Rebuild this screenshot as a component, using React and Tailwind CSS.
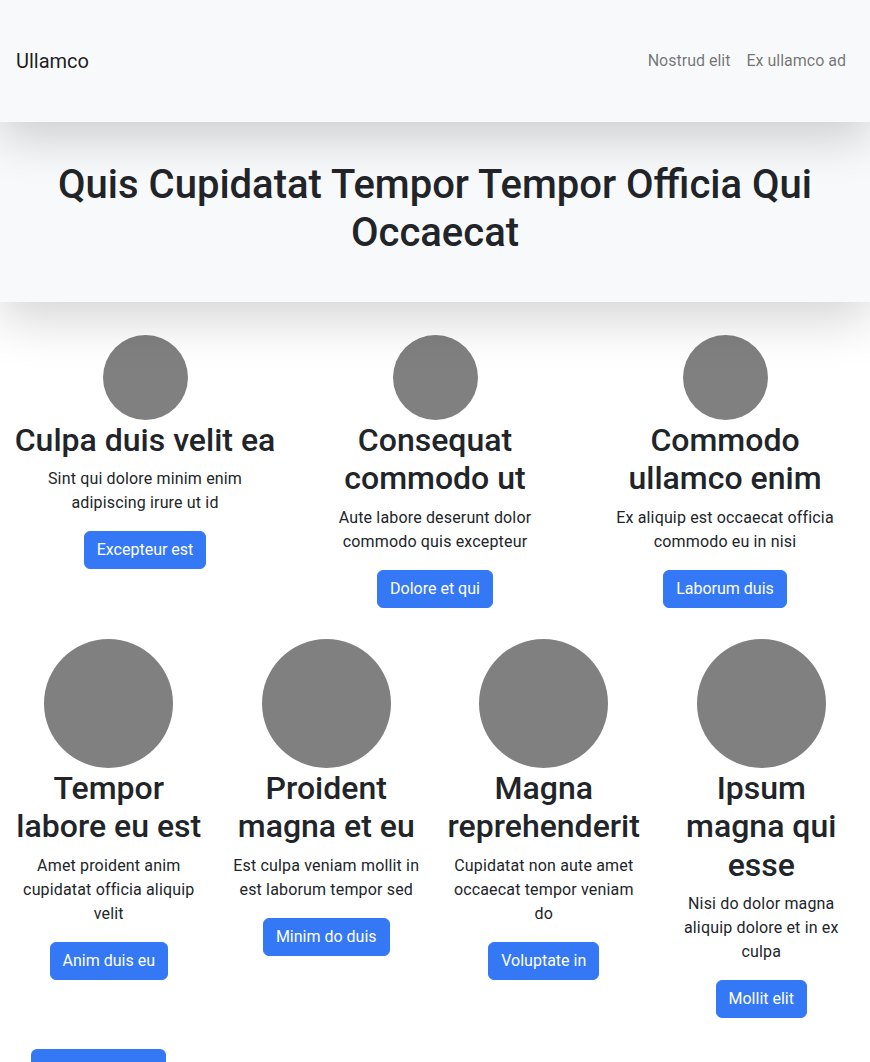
const topCards = [
  { title: 'Culpa duis velit ea', text: 'Sint qui dolore minim enim adipiscing irure ut id', cta: 'Excepteur est' },
  { title: 'Consequat commodo ut', text: 'Aute labore deserunt dolor commodo quis excepteur', cta: 'Dolore et qui' },
  { title: 'Commodo ullamco enim', text: 'Ex aliquip est occaecat officia commodo eu in nisi', cta: 'Laborum duis' },
]

const bottomCards = [
  { title: 'Tempor labore eu est', text: 'Amet proident anim cupidatat officia aliquip velit', cta: 'Anim duis eu' },
  { title: 'Proident magna et eu', text: 'Est culpa veniam mollit in est laborum tempor sed', cta: 'Minim do duis' },
  { title: 'Magna reprehenderit', text: 'Cupidatat non aute amet occaecat tempor veniam do', cta: 'Voluptate in' },
  { title: 'Ipsum magna qui esse', text: 'Nisi do dolor magna aliquip dolore et in ex culpa', cta: 'Mollit elit' },
]

function Card({ card, size }) {
  return (
    <div className="flex flex-col items-center px-3 text-center">
      <div className={`${size} mb-px shrink-0 rounded-full bg-[#808080]`} />
      <h2 className="mb-2 text-[32px] font-medium leading-[1.2] text-[#212529]">{card.title}</h2>
      <p className="mb-4 text-base leading-6 tracking-[0.01em] text-[#212529]">{card.text}</p>
      <button className="rounded-md border border-[#3478f6] bg-[#3478f6] px-3 py-1.5 text-base leading-6 text-white">
        {card.cta}
      </button>
    </div>
  )
}

export default function App() {
  return (
    <div className="min-h-screen bg-white font-['Roboto','Helvetica_Neue',sans-serif] text-[#212529]">
      <nav className="relative z-20 flex h-[122px] items-center justify-between bg-[#f8f9fa] px-4 shadow-[0_1rem_3rem_rgba(0,0,0,0.175)]">
        <a className="text-xl text-black/90">Ullamco</a>
        <div className="flex">
          <a className="px-2 text-base text-black/55">Nostrud elit</a>
          <a className="px-2 text-base text-black/55">Ex ullamco ad</a>
        </div>
      </nav>

      <header className="relative z-10 bg-[#f8f9fa] px-6 pb-[45px] pt-[39px] text-center shadow-[0_1rem_3rem_rgba(0,0,0,0.175)]">
        <h1 className="text-[40px] font-medium leading-[1.2]">Quis Cupidatat Tempor Tempor Officia Qui Occaecat</h1>
      </header>

      <section className="grid grid-cols-3 pt-[33px]">
        {topCards.map((c) => (
          <Card key={c.title} card={c} size="h-[85px] w-[85px]" />
        ))}
      </section>

      <section className="grid grid-cols-4 pt-[31px]">
        {bottomCards.map((c) => (
          <Card key={c.title} card={c} size="h-[129px] w-[129px]" />
        ))}
      </section>

      <div className="pl-[31px] pt-[31px]">
        <button className="w-[135px] rounded-md bg-[#3478f6] pb-1 pt-3 text-base leading-6 text-white">Ad amet</button>
      </div>
    </div>
  )
}
